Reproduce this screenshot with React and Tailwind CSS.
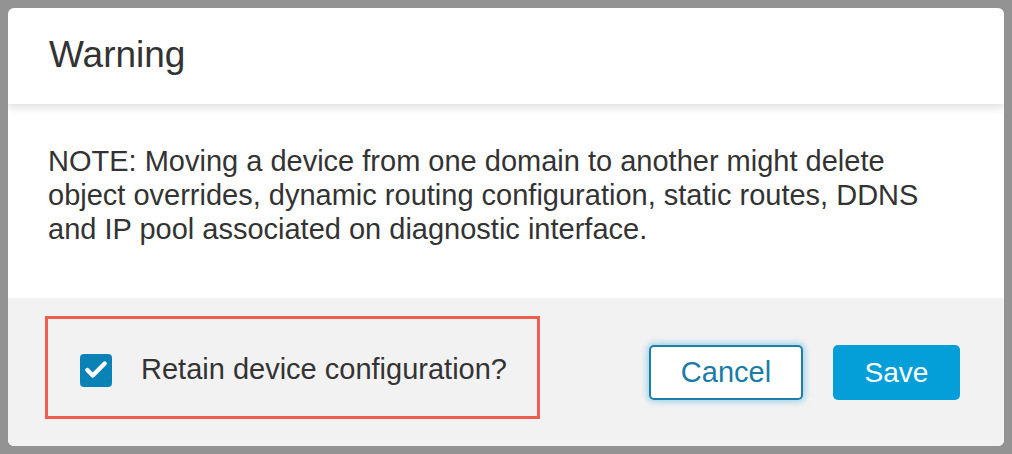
import { Check } from 'lucide-react';

const App = () => {
  return (
    <div
      className="w-[1012px] h-[454px] bg-[#939393] p-[8px]"
      style={{ fontFamily: '"Liberation Sans", Arial, sans-serif' }}
    >
      <div className="w-[996px] h-[438px] rounded-[6px] overflow-hidden flex flex-col bg-white">
        {/* Header */}
        <div className="relative h-[96px] flex items-center px-[41px] shrink-0 shadow-[0_4px_8px_rgba(0,0,0,0.12)] z-10">
          <h2 className="text-[37px] text-[#333333] leading-none pb-[4px]">Warning</h2>
        </div>

        {/* Body */}
        <div className="h-[194px] px-[40px] pt-[40px] shrink-0">
          <p className="text-[29px] leading-[34px] text-[#333333] whitespace-nowrap">
            NOTE: Moving a device from one domain to another might delete
            <br />
            object overrides, dynamic routing configuration, static routes, DDNS
            <br />
            and IP pool associated on diagnostic interface.
          </p>
        </div>

        {/* Footer */}
        <div className="flex-1 bg-[#f2f2f2] flex items-start justify-between pl-[37px] pr-[44px] pt-[18px]">
          <div className="w-[495px] h-[103px] border-[3px] border-[#f05e50] flex items-center pl-[32px]">
            <span className="w-[32px] h-[33px] mt-[5px] rounded-[4px] bg-[#0a82b6] flex items-center justify-center">
              <Check size={26} strokeWidth={4} className="text-white" />
            </span>
            <span className="ml-[29px] text-[29px] text-[#333333] pt-[4px] whitespace-nowrap">
              Retain device configuration?
            </span>
          </div>

          <div className="flex items-center gap-[30px] mt-[29px]">
            <button className="w-[154px] h-[55px] bg-white border-2 border-[#1e7ea6] rounded-[5px] text-[29px] text-[#1a7aa8] shadow-[0_0_6px_2px_rgba(4,159,217,0.35)]">
              Cancel
            </button>
            <button className="w-[127px] h-[55px] bg-[#049fd9] rounded-[5px] text-[28px] text-white">
              Save
            </button>
          </div>
        </div>
      </div>
    </div>
  );
};

export default App;
